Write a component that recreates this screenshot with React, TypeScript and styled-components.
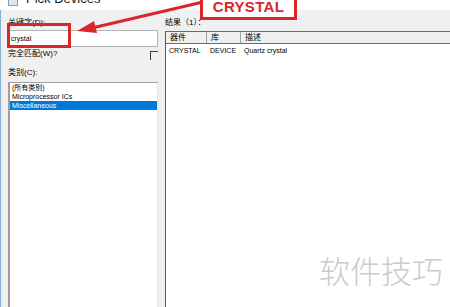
import styled, { createGlobalStyle } from 'styled-components';

const GlobalStyle = createGlobalStyle`
  html, body {
    margin: 0;
    padding: 0;
    background: #ffffff;
  }
  body {
    font-family: "Liberation Sans", "Noto Sans CJK SC", sans-serif;
  }
`;

const Window = styled.div`
  position: relative;
  width: 450px;
  height: 307px;
  overflow: hidden;
  display: flex;
  flex-direction: column;
  background: #f0f0f0;
`;

const TitleBar = styled.div`
  height: 10px;
  flex: none;
  background: #ffffff;
  display: flex;
  align-items: flex-start;
  gap: 8px;
  padding-left: 8px;
  overflow: hidden;
`;

const TitleIcon = styled.div`
  width: 8px;
  height: 8px;
  margin-top: -4px;
  border: 1px solid #7f9db9;
  background: #dfe8f2;
`;

const TitleText = styled.div`
  margin-top: -8px;
  font-family: "Liberation Sans", sans-serif;
  font-size: 13px;
  line-height: 14px;
  color: #1a1a1a;
`;

const Body = styled.div`
  flex: 1;
  min-height: 0;
  display: grid;
  grid-template-columns: 150px 285px;
  column-gap: 7px;
  padding: 8px 0 0 7px;
  border-left: 1px solid #86b1d6;
`;

const Column = styled.div`
  display: flex;
  flex-direction: column;
  min-height: 0;
`;

const Label = styled.div<{ $gap?: number }>`
  height: 9px;
  margin-top: ${({ $gap }) => $gap ?? 0}px;
  font-size: 8px;
  line-height: 9px;
  color: #000000;
  white-space: nowrap;
`;

const Input = styled.div`
  height: 15px;
  margin-top: 3px;
  padding-left: 2px;
  background: #ffffff;
  border: 1px solid #b4b4b4;
  font-size: 7px;
  line-height: 15px;
  color: #000000;
`;

const CheckRow = styled.div`
  display: flex;
  align-items: flex-start;
  justify-content: space-between;
  height: 9px;
  margin-top: 2px;
  font-size: 8px;
  line-height: 9px;
`;

const CheckBox = styled.div`
  width: 7px;
  height: 8px;
  margin-top: 2px;
  border-top: 1px solid #3c3c3c;
  border-left: 1px solid #3c3c3c;
`;

const ListBox = styled.div`
  flex: 1;
  margin-top: 5px;
  background: #ffffff;
  border-top: 1px solid #a0a0a0;
  border-left: 2px solid #a39d9d;
  border-right: 1px solid #e3e3e3;
  display: flex;
  flex-direction: column;
`;

const ListItem = styled.div<{ $selected?: boolean }>`
  height: 9px;
  padding-left: 2px;
  font-size: 7px;
  line-height: 9px;
  color: ${({ $selected }) => ($selected ? '#ffffff' : '#000000')};
  background: ${({ $selected }) => ($selected ? '#0078d7' : 'transparent')};
`;

const Table = styled.div`
  flex: 1;
  margin-top: 4px;
  background: #ffffff;
  border-top: 1px solid #6b6b6b;
  border-left: 1px solid #5a5a5a;
  display: flex;
  flex-direction: column;
`;

const HeaderRow = styled.div`
  display: grid;
  grid-template-columns: 41px 34px 1fr;
  height: 11px;
  background: #f0f0f0;
  border-bottom: 1px solid #6b6b6b;
`;

const HeaderCell = styled.div<{ $last?: boolean }>`
  padding-left: 4px;
  font-size: 8px;
  line-height: 11px;
  color: #000000;
  border-right: ${({ $last }) => ($last ? 'none' : '1px solid #a0a0a0')};
`;

const DataRow = styled.div`
  display: grid;
  grid-template-columns: 41px 34px 1fr;
  height: 9px;
  margin-top: 2px;
`;

const DataCell = styled.div`
  padding-left: 3px;
  font-size: 7px;
  line-height: 9px;
  color: #000000;
  white-space: nowrap;
`;

const Watermark = styled.div`
  position: absolute;
  left: 319px;
  top: 250px;
  font-family: "Noto Sans CJK SC", sans-serif;
  font-weight: 300;
  font-size: 31px;
  line-height: 40px;
  color: #cbcbcb;
`;

const HighlightBox = styled.div`
  position: absolute;
  left: 7px;
  top: 23px;
  width: 58px;
  height: 19px;
  border: 3px solid #d9262b;
`;

const Callout = styled.div`
  position: absolute;
  left: 200px;
  top: -12px;
  width: 91px;
  height: 26px;
  border: 3px solid #d9262b;
  background: #ffffff;
  display: flex;
  align-items: flex-end;
  justify-content: center;
  font-family: "Liberation Sans", sans-serif;
  font-weight: bold;
  font-size: 15px;
  line-height: 20px;
  color: #d9262b;
  letter-spacing: 0.3px;
`;

const ArrowSvg = styled.svg`
  position: absolute;
  left: 0;
  top: 0;
  pointer-events: none;
`;

export default function App() {
  return (
    <>
      <GlobalStyle />
      <Window>
        <TitleBar>
          <TitleIcon />
          <TitleText>Pick Devices</TitleText>
        </TitleBar>
        <Body>
          <Column>
            <Label>关键字(D):</Label>
            <Input>crystal</Input>
            <CheckRow>
              <span>完全匹配(W)?</span>
              <CheckBox />
            </CheckRow>
            <Label $gap={10}>类别(C):</Label>
            <ListBox>
              <ListItem>(所有类别)</ListItem>
              <ListItem>Microprocessor ICs</ListItem>
              <ListItem $selected>Miscellaneous</ListItem>
            </ListBox>
          </Column>
          <Column>
            <Label>结果（1）：</Label>
            <Table>
              <HeaderRow>
                <HeaderCell>器件</HeaderCell>
                <HeaderCell>库</HeaderCell>
                <HeaderCell $last>描述</HeaderCell>
              </HeaderRow>
              <DataRow>
                <DataCell>CRYSTAL</DataCell>
                <DataCell>DEVICE</DataCell>
                <DataCell>Quartz crystal</DataCell>
              </DataRow>
            </Table>
          </Column>
        </Body>
        <Watermark>软件技巧</Watermark>
        <HighlightBox />
        <Callout>CRYSTAL</Callout>
        <ArrowSvg width="450" height="60" viewBox="0 0 450 60">
          <line x1="92" y1="28" x2="203" y2="2" stroke="#d9262b" strokeWidth="3" />
          <polygon points="77,31 97,33 94,21" fill="#d9262b" />
        </ArrowSvg>
      </Window>
    </>
  );
}
